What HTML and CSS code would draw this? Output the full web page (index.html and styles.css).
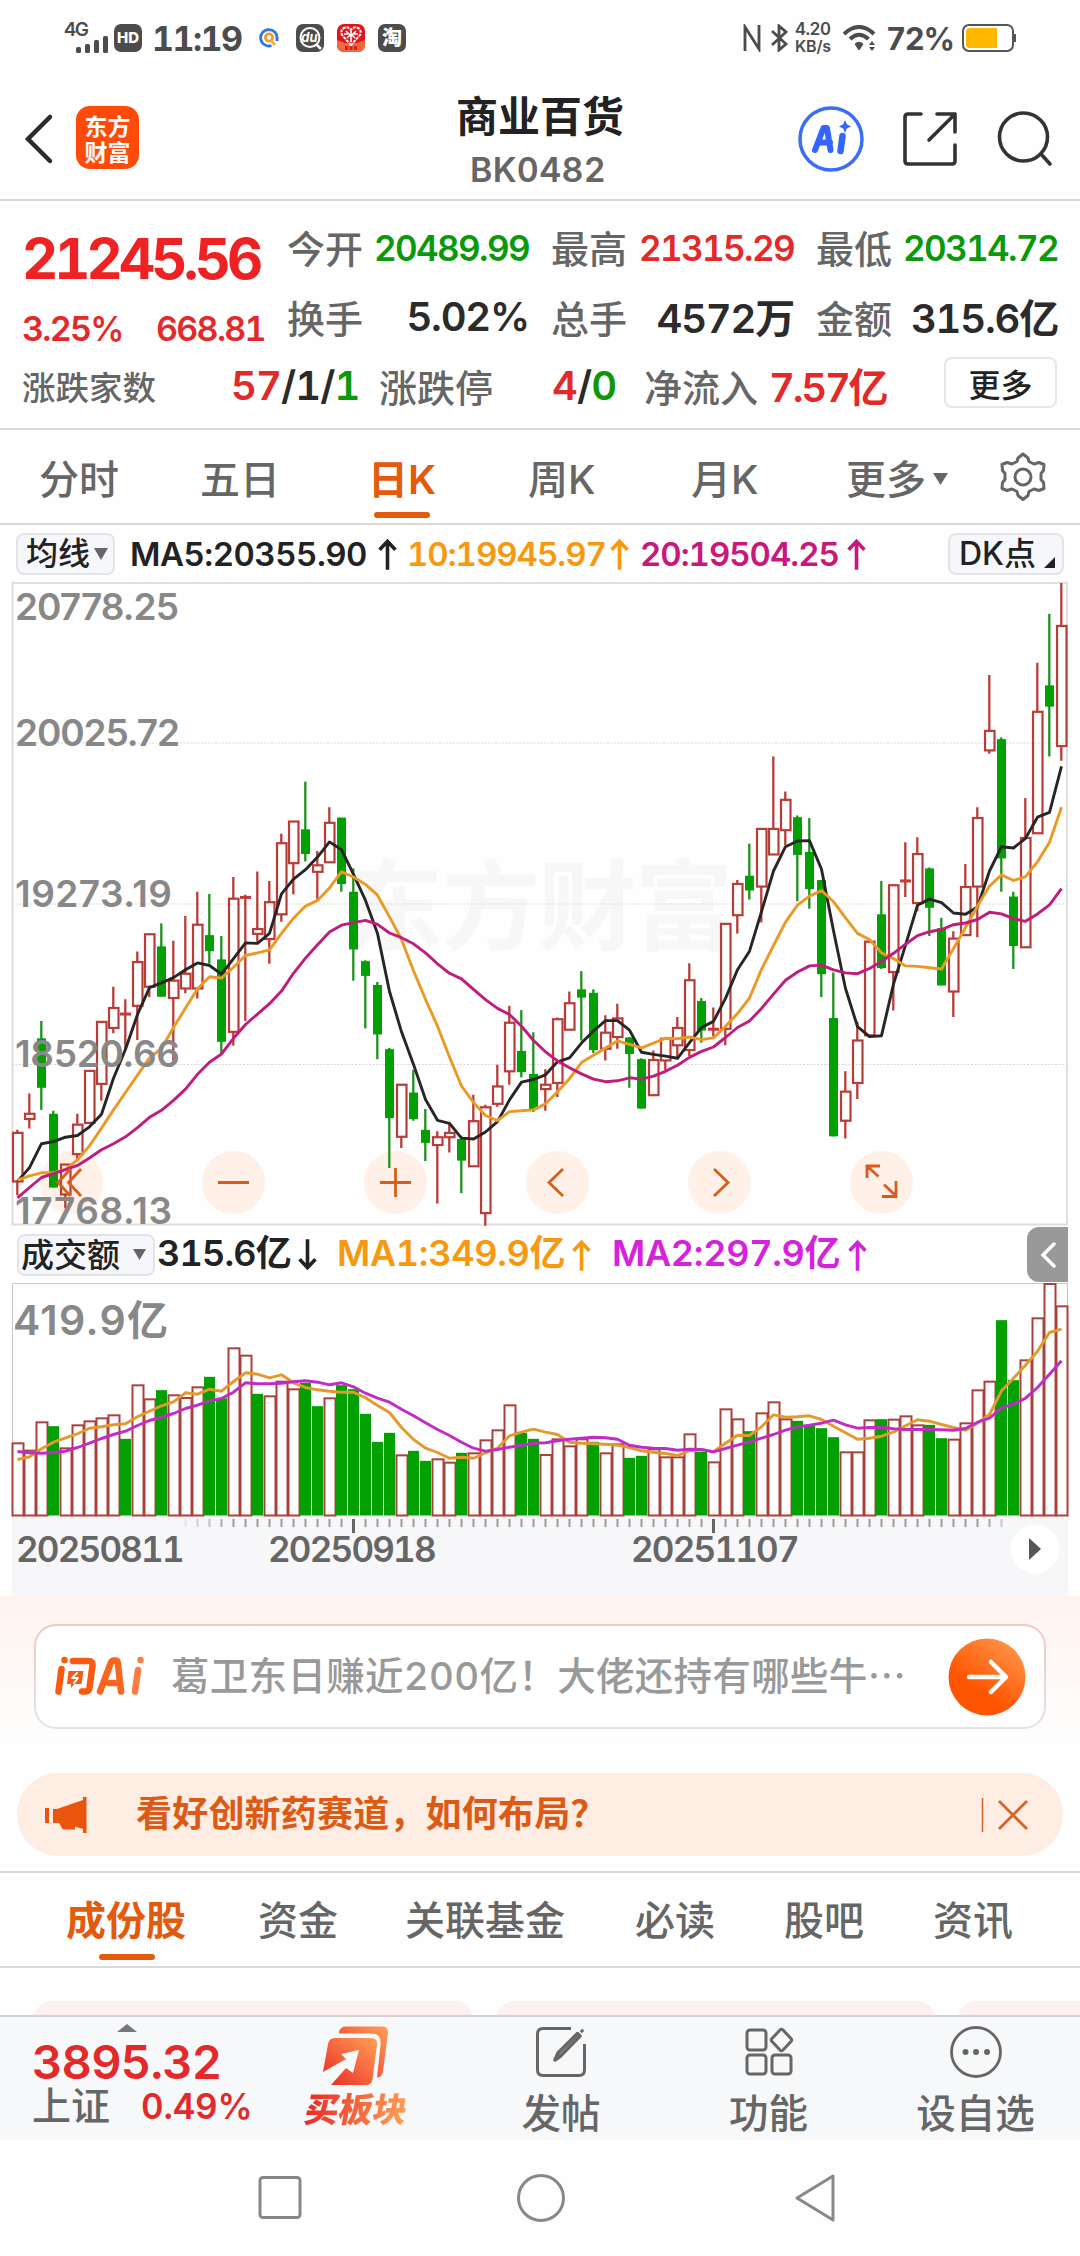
FILE: index.html
```html
<!DOCTYPE html>
<html lang="zh-CN">
<head>
<meta charset="utf-8">
<title>商业百货 BK0482</title>
<link rel="stylesheet" href="styles.css">
</head>
<body>
<svg class="defs" width="0" height="0">
  <defs>
    <symbol id="up" viewBox="0 0 18 30"><path d="M9 30V3M1.500 11L9 3l7.500 8" fill="none" stroke="currentColor" stroke-width="3.400"/></symbol>
    <symbol id="down" viewBox="0 0 18 30"><path d="M9 0v27M1.500 19L9 27l7.500-8" fill="none" stroke="currentColor" stroke-width="3.400"/></symbol>
    <linearGradient id="hot" x1="0" y1="1" x2="1" y2="0"><stop offset="0" stop-color="#ea2a25"/><stop offset="1" stop-color="#ffa056"/></linearGradient>
    <linearGradient id="sun" x1="0.200" y1="1" x2="0.900" y2="0"><stop offset="0.300" stop-color="#ff5500"/><stop offset="1" stop-color="#ff9a50"/></linearGradient>
  </defs>
</svg>

<div class="status">
  <div class="net">
    <span class="gen">4G</span>
    <svg width="34" height="17" fill="#4c4c4c"><rect x="0" y="11" width="5" height="6" rx="1.500"/><rect x="9" y="8" width="5" height="9" rx="1.500"/><rect x="18" y="4" width="5" height="13" rx="1.500"/><rect x="27" y="0" width="5" height="17" rx="1.500"/></svg>
  </div>
  <span class="badge hd">HD</span>
  <span class="clock">11:19</span>
  <svg class="app quark" width="20" height="20" viewBox="0 0 20 20" fill="none" stroke-width="2.800"><path d="M12.500 17.500A8.200 8.200 0 1 1 18 10.500" stroke="#2f78e0"/><path d="M18 10v3" stroke="#3b6fd0"/><circle cx="10" cy="9.500" r="3.600" stroke="#f39a1f"/><path d="M12 12.500l4 4.500" stroke="#f3b13a"/></svg>
  <svg class="app" width="28" height="28" viewBox="0 0 28 28"><rect width="28" height="28" rx="7" fill="#4c4c4c"/><circle cx="14" cy="13.500" r="9.500" fill="none" stroke="#fff" stroke-width="2"/><path d="M20 20l5 5" stroke="#fff" stroke-width="2.500"/><text x="13.500" y="18" text-anchor="middle" class="mini">du</text></svg>
  <svg class="app" width="28" height="28" viewBox="0 0 28 28"><rect width="28" height="28" rx="7" fill="#e0161d"/><path d="M0 16l8 3h12l8-3v5q0 7-7 7H7q-7 0-7-7z" fill="#f26a3c"/><path d="M14 21L5 11q-2-5 2-7t7 2q3-4 7-2t2 7z" fill="none" stroke="#fff" stroke-width="2" stroke-dasharray="3 1"/><path d="M14 7v11M9 7l4 4-3 3M19 7l-4 4 3 3M7 10h4M17 10h4" fill="none" stroke="#fff" stroke-width="1.600"/><path d="M8 24h12" stroke="#d91f26" stroke-width="4" stroke-dasharray="3 1.500"/></svg>
  <span class="badge tao">淘</span>
  <svg class="nfc" width="18" height="28" viewBox="0 0 18 28" fill="none" stroke="#4c4c4c" stroke-width="2.800"><path d="M2 27V3l14 22V1"/></svg>
  <svg class="bt" width="18" height="28" viewBox="0 0 18 28" fill="none" stroke="#4c4c4c" stroke-width="2.800"><path d="M2 7l14 13-7 6V2l7 6L2 21"/></svg>
  <div class="rate"><span>4.20</span><span>KB/s</span></div>
  <svg class="wifi" width="34" height="27" viewBox="0 0 34 27" fill="none" stroke="#4c4c4c" stroke-width="4"><path d="M1 9q15-14 30 0M7 14q9-8.500 18.500 0"/><path d="M12 19q4-3.500 8 0l-4 6z" fill="#4c4c4c" stroke-width="1"/><path d="M26 20l3-4 3 4zM26 22l3 4 3-4z" fill="#4c4c4c" stroke="none"/></svg>
  <span class="pct">72%</span>
  <svg class="battery" width="54" height="28" viewBox="0 0 54 28"><rect x="1" y="1" width="50" height="26" rx="6" fill="#fff" stroke="#555" stroke-width="2"/><path d="M4 8q0-4 4-4h27v20H8q-4 0-4-4z" fill="#ffb800"/><path d="M53 10v8" stroke="#555" stroke-width="2"/></svg>
</div>

<header class="header">
  <svg class="back" width="30" height="52" viewBox="0 0 30 52" fill="none" stroke="#2b2b2b" stroke-width="4.500" stroke-linecap="round"><path d="M26 4L4 26l22 22"/></svg>
  <div class="logo"><span>东方</span><span>财富</span></div>
  <div class="title"><h1>商业百货</h1><p>BK0482</p></div>
  <svg class="ai" width="66" height="66" viewBox="0 0 66 66"><circle cx="33" cy="33" r="31" fill="none" stroke="#3c6ef5" stroke-width="3.500"/><path d="M17 44L25.500 22h3.500l3.500 22M20 36.500h12" fill="none" stroke="#3366ff" stroke-width="6" stroke-linejoin="round" stroke-linecap="round"/><path d="M44.500 30L42.500 45" stroke="#3366ff" stroke-width="6.500" stroke-linecap="round"/><path d="M47 14l1.800 4.200L53 20.500l-4.200 2L47 27l-1.800-4.500-4.200-2 4.200-2.300z" fill="#3366ff"/></svg>
  <svg class="share" width="56" height="56" viewBox="0 0 56 56" fill="none" stroke="#333" stroke-width="3.600" stroke-linejoin="round" stroke-linecap="round"><path d="M19 3H6q-3 0-3 3v44q0 3 3 3h44q3 0 3-3V34M35 3h18v18M53 3L27 29"/></svg>
  <svg class="find" width="56" height="56" viewBox="0 0 56 56" fill="none" stroke="#333" stroke-width="3.600" stroke-linecap="round"><circle cx="26.500" cy="26" r="24"/><path d="M44 43l9 10"/></svg>
</header>

<section class="quote">
  <div class="quote-top">
    <div class="last">
      <div class="price">21245.56</div>
      <div class="change"><span>3.25%</span><span>668.81</span></div>
    </div>
    <dl class="stats">
      <div><dt>今开</dt><dd class="sm green">20489.99</dd></div>
      <div><dt>最高</dt><dd class="sm red">21315.29</dd></div>
      <div><dt>最低</dt><dd class="sm green">20314.72</dd></div>
      <div><dt>换手</dt><dd>5.02%</dd></div>
      <div><dt>总手</dt><dd>4572万</dd></div>
      <div><dt>金额</dt><dd>315.6亿</dd></div>
    </dl>
  </div>
  <div class="breadth">
    <span class="lbl small">涨跌家数</span><span class="val"><b class="red">57</b>/1/<b class="green">1</b></span>
    <span class="lbl">涨跌停</span><span class="val"><b class="red">4</b>/<b class="green">0</b></span>
    <span class="lbl">净流入</span><span class="val flow red">7.57亿</span>
    <button class="more">更多</button>
  </div>
</section>

<nav class="periods">
  <span>分时</span><span>五日</span><span class="on">日K</span><span>周K</span><span>月K</span>
  <span class="drop">更多<svg width="16" height="12"><path d="M0 0h15L7.500 12z" fill="#666"/></svg></span>
  <svg width="50" height="50" viewBox="0 0 50 50" fill="none" stroke="#666" stroke-width="3" stroke-linejoin="round"><path d="M20 6l5-4 5 4 1 3.500 5 2.500 5-1.500 5 2-.5 6-2.500 3v6l2.500 3 .5 6-5 2-5-1.500-5 2.500-1 4-5 4-5-4-1-4-5-2.500-5 1.500-5-2 .5-6 2.500-3v-6l-2.500-3-.5-6 5-2 5 1.500 5-2.500z"/><circle cx="25" cy="25" r="8"/></svg>
</nav>

<div class="ma-row">
  <span class="chip">均线<svg width="15" height="12"><path d="M0 0h14L7 12z" fill="#666"/></svg></span>
  <span class="ma k">MA5:20355.90</span><svg class="arr k"><use href="#up"/></svg>
  <span class="ma o">10:19945.97</span><svg class="arr o"><use href="#up"/></svg>
  <span class="ma p">20:19504.25</span><svg class="arr p"><use href="#up"/></svg>
  <span class="chip dk">DK点<svg width="11" height="11"><path d="M11 0v11H0z" fill="#222"/></svg></span>
</div>

<svg class="kline" id="kline" width="1080" height="646" viewBox="0 0 1080 646">
  <text class="mark" x="345" y="360" textLength="388">东方财富</text>
  <path d="M12.500 1v641.500H1067V1z" fill="none" stroke="#dedede" stroke-width="2"/>
  <path d="M12 161H1067M12 322H1067M12 482.500H1067" stroke="#d9d9d9" stroke-width="1" stroke-dasharray="2 1.500"/>
  <g fill="#ffe6d9" fill-opacity="0.600"><circle cx="71.500" cy="600.500" r="31.500"/><circle cx="233.500" cy="600.500" r="31.500"/><circle cx="395.500" cy="600.500" r="31.500"/><circle cx="557.500" cy="600.500" r="31.500"/><circle cx="719.500" cy="600.500" r="31.500"/><circle cx="881.500" cy="600.500" r="31.500"/></g>
  <g id="candles"></g>
  <g fill="none" stroke="#d95c1c" stroke-width="2.800"><path d="M70.500 587L58 600.500 70.500 614M81 587L68.500 600.500 81 614M218 600.500h31M380 600.500h31M395.500 586v29M563 587l-14 13.500L563 614M714 587l14 13.500L714 614M867 596v-12h13M867.500 584.500l11 10M896 599v15.500h-14M884 602.500l12 11.500"/></g>
  <g class="axis"><text x="15" y="38" textLength="164">20778.25</text><text x="15" y="164" textLength="165">20025.72</text><text x="15" y="324.500" textLength="157">19273.19</text><text x="15" y="484.500" textLength="165">18520.66</text><text x="15" y="642" textLength="157">17768.13</text></g>
</svg>

<div class="vol-row">
  <span class="chip vol">成交额<svg width="14" height="11"><path d="M0 0h13L6.500 11z" fill="#666"/></svg></span>
  <span class="ma k">315.6亿</span><svg class="arr k"><use href="#down"/></svg>
  <span class="ma o">MA1:349.9亿</span><svg class="arr o"><use href="#up"/></svg>
  <span class="ma v">MA2:297.9亿</span><svg class="arr v"><use href="#up"/></svg>
  <span class="fold"><svg width="16" height="26" viewBox="0 0 16 26" fill="none" stroke="#fff" stroke-width="3.500" stroke-linecap="round"><path d="M14 2L3 13l11 11"/></svg></span>
</div>

<svg class="volume" width="1080" height="234" viewBox="0 0 1080 234">
  <path d="M12.500 234V.5H1067.500V234" fill="none" stroke="#c8c8c8"/>
  <text class="big" x="13" y="51.500" textLength="155">419.9亿</text>
  <g id="bars"></g>
</svg>

<div class="dates">
  <svg class="ticks" id="ticks" width="1056" height="16"></svg>
  <div class="days"><span>20250811</span><span>20250918</span><span>20251107</span>
    <svg width="50" height="50"><circle cx="25" cy="25" r="24.500" fill="#fff"/><path d="M19 14v22l12-11z" fill="#555"/></svg></div>
</div>

<section class="ask">
  <div class="ask-card">
    <svg width="90" height="42" viewBox="0 0 90 42" fill="none" stroke="#f75a10" stroke-width="6.500" stroke-linecap="round" stroke-linejoin="round"><path d="M6.500 13L3.500 35.500M9.500 4v.1M18 5h15.500q4.500 0 4 4.500L34.500 32q-.6 3.500-4 3.500H27"/><path d="M13.500 15h15l-2 13h-7l-3.500 4v-4h-4z" fill="#f75a10" stroke="none"/><path d="M22 17l-5 5h6l-4 5" stroke="#fff" stroke-width="1.800"/><path d="M45 35.500L56 6.500q.8-2 3-2h1.500q2 0 2.300 2.500L66 35.500M54 27h9" stroke="#f9651f"/><path d="M83 14l-3 21.500M85.500 4v.1" stroke="#ff7b45"/></svg>
    <span class="ask-text">葛卫东日赚近200亿！大佬还持有哪些牛<i>⋯</i></span>
    <svg class="go" width="78" height="78" viewBox="0 0 78 78"><circle cx="39" cy="39" r="38.500" fill="url(#sun)"/><path d="M21 39h36M43 24l15 15-15 15" fill="none" stroke="#fff" stroke-width="4.500" stroke-linecap="round" stroke-linejoin="round"/></svg>
  </div>
  <div class="promo">
    <svg width="42" height="36" viewBox="0 0 42 36" fill="#e9550c"><path d="M0 11h4v15H0zM8 12h4L38 3V0h3.500v36H38v-4l-8-2.500v3H18L14 26H8z"/></svg>
    <span class="promo-text">看好创新药赛道，如何布局？</span>
    <svg width="50" height="34" viewBox="0 0 50 34" fill="none" stroke="#d9622a"><path d="M1.500 0v34" stroke-width="1.500"/><path d="M18 3l28 28M46 3L18 31" stroke-width="2.800"/></svg>
  </div>
</section>

<nav class="sections"><span class="on">成份股</span><span>资金</span><span>关联基金</span><span>必读</span><span>股吧</span><span>资讯</span></nav>
<div class="cards"><i></i><i></i><i></i></div>

<footer class="bar">
  <div class="index">
    <svg width="20" height="8"><path d="M0 8L10 0l10 8z" fill="#777"/></svg>
    <div class="idx">3895.32</div>
    <div class="sub"><span>上证</span><b>0.49%</b></div>
  </div>
  <div class="buy">
    <svg width="66" height="60" viewBox="0 0 66 60"><path d="M16 6q1-5.500 7-5.500h36q6.500 0 6 6.500l-5 38q-.7 6-6 6.500l3.500-32q1.300-12-9-12H16z" fill="url(#hot)"/><path d="M5 18q.8-6 7-6h36q7 0 6 7l-4.500 34q-.8 6-6.500 6H8l15-17 7 5L36 24l-18 4 5 5L0 46z" fill="url(#hot)"/></svg>
    <span>买板块</span>
  </div>
  <div class="act a1"><svg width="52" height="52" viewBox="0 0 52 52" fill="none" stroke="#666" stroke-width="3" stroke-linejoin="round"><path d="M36 2.500H8Q2.500 2.500 2.500 8v36q0 5.500 5.500 5.500h36q5.500 0 5.500-5.500V18"/><path d="M20 34l3-7L42.500 7.500l2.500 2.500L25.500 30zM46 4l2 2" stroke-width="3.500"/></svg><span>发帖</span></div>
  <div class="act a2"><svg width="52" height="52" viewBox="0 0 52 52" fill="none" stroke="#666" stroke-width="3" stroke-linejoin="round"><rect x="4" y="4" width="19" height="20" rx="3"/><rect x="4" y="29" width="19" height="19" rx="3"/><rect x="29" y="29" width="19" height="19" rx="3"/><path d="M37 4q1.500-1.500 3 0l8 8.500q1.500 1.500 0 3L40 24q-1.500 1.500-3 0l-8-8.500q-1.500-1.500 0-3z"/></svg><span>功能</span></div>
  <div class="act a3"><svg width="52" height="52" viewBox="0 0 52 52" fill="none" stroke="#666" stroke-width="2.800"><circle cx="26" cy="26" r="24.500"/><g fill="#666" stroke="none"><circle cx="15.500" cy="26" r="3"/><circle cx="26" cy="26" r="3"/><circle cx="37" cy="26" r="3"/></g></svg><span>设自选</span></div>
</footer>

<div class="sysnav">
  <svg width="44" height="48" viewBox="0 0 44 48"><rect x="2" y="3.500" width="40" height="40" rx="3"/></svg>
  <svg width="48" height="48" viewBox="0 0 48 48"><circle cx="24" cy="24" r="22.500"/></svg>
  <svg width="42" height="48" viewBox="0 0 42 48"><path d="M39 2v44L3 24z"/></svg>
</div>
<script src="chart.js"></script>
</body>
</html>
```
FILE: styles.css
```css
* { box-sizing: border-box; }
body {
  margin: 0;
  width: 1080px;
  height: 2256px;
  overflow: hidden;
  background: #fefefe;
  color: #666;
  font-family: Inter, "Noto Sans CJK SC", sans-serif;
  font-weight: 500;
  font-variant-numeric: tabular-nums;
}
svg { display: block; flex: none; }
.defs { position: absolute; }
h1, p, dl, dd { margin: 0; }
b, i { font-weight: inherit; font-style: normal; }
.red { color: #e22a2a; }
.green { color: #0a990a; }
span { white-space: nowrap; }

/* status bar */
.status { height: 76px; display: flex; align-items: center; padding-left: 64px; color: #4c4c4c; }
.net { width: 50px; height: 30px; display: flex; flex-direction: column; }
.net svg { margin-left: 12px; margin-top: -1px; }
.gen { font-size: 19px; line-height: 14px; font-weight: 600; letter-spacing: -1.500px; }
.badge { width: 28px; height: 28px; border-radius: 7px; background: #4c4c4c; color: #fff; text-align: center; line-height: 28px; font-weight: 800; }
.hd { font-size: 15px; }
.tao { font-size: 20px; margin-left: 13px; }
.clock { font-size: 34px; font-weight: 700; margin-left: 10px; width: 107px; letter-spacing: -1.500px; }
.app { margin-left: 13px; }
.quark { margin-left: 0; margin-right: 4px; }
.mini { font: italic 700 13px Inter, sans-serif; fill: #fff; }
.nfc { margin-left: 337px; }
.bt { margin-left: 9px; }
.rate { margin-left: 7px; width: 48px; display: flex; flex-direction: column; font-size: 17px; line-height: 17px; font-weight: 600; letter-spacing: -0.500px; }
.rate span + span { font-size: 16px; letter-spacing: -0.200px; }
.pct { font-size: 31px; font-weight: 700; margin-left: 9px; width: 76px; letter-spacing: -1.300px; }

/* title bar */
.header { height: 125px; border-bottom: 2px solid #d8d8d8; display: grid; grid-template-columns: 52px 334px 388px 104px 95px 1fr; padding-left: 24px; align-items: center; }
.header svg { margin-top: 2px; }
.logo { width: 63px; height: 63px; border-radius: 14px; background: #ff4b0a; color: #fff; font: 700 23px/26px "Noto Sans CJK SC", sans-serif; display: flex; flex-direction: column; align-items: center; justify-content: center; }
.title { text-align: center; width: 260px; align-self: start; }
.title h1 { font-size: 42px; line-height: 60px; font-weight: 600; color: #222; padding-top: 11px; }
.title p { font-size: 34px; line-height: 44px; margin-top: 1px; font-weight: 600; letter-spacing: 0.300px; margin-left: -4px; }

/* quote */
.quote { height: 229px; border-bottom: 2px solid #d8d8d8; padding: 15px 0 0 22px; }
.quote-top { display: grid; grid-template-columns: 265px 1fr; height: 139px; }
.price { font-size: 56px; line-height: 87px; font-weight: 700; color: #ee2222; letter-spacing: -3.900px; }
.change { display: grid; grid-template-columns: 134px 1fr; font-size: 34px; line-height: 52px; font-weight: 600; color: #e22a2a; letter-spacing: -1.700px; }
.stats { display: grid; grid-template-columns: 242px 265px 264px; grid-auto-rows: 60px; row-gap: 10px; }
.stats div { display: flex; justify-content: space-between; align-items: center; }
.stats div:nth-child(3n+2), .stats div:nth-child(3n) { padding-left: 22px; }
dt { font-size: 38px; }
dd { font-size: 40px; color: #2b2b2b; letter-spacing: -1.200px; font-weight: 600; }
dd.sm { font-size: 35px; letter-spacing: -1.600px; padding-top: 4px; }
dd.red { color: #e22a2a; }
dd.green { color: #0a990a; }
.breadth { display: grid; grid-template-columns: 209px 148px 173px 92px 125px 175px 113px; height: 60px; align-items: center; }
.lbl { font-size: 38px; }
.small { font-size: 33.500px; }
.val { font-size: 40px; color: #2b2b2b; letter-spacing: -0.900px; font-weight: 600; }
.val.red { color: #e22a2a; }
.val.flow { letter-spacing: -2.200px; }
.more { height: 51px; margin-top: -5px; border: 2px solid #e6e6e6; border-radius: 8px; background: #fff; font: 500 32px Inter, "Noto Sans CJK SC", sans-serif; color: #222; padding: 0; }

/* period tabs */
.periods { height: 95px; border-bottom: 2px solid #d8d8d8; display: grid; grid-template-columns: 161px 168px 160px 163px 155px 152px 1fr; padding-left: 39px; align-items: center; font-size: 40px; }
.periods > span { line-height: 91px; height: 94px; padding-top: 4px; position: relative; width: max-content; }
.on { color: #e25a0c; font-weight: 600; position: relative; }
.on::after { content: ""; position: absolute; left: 50%; bottom: 6px; width: 56px; height: 6px; margin-left: -28px; border-radius: 3px; background: #e25a0c; }
.drop { display: flex; align-items: center; gap: 7px; }

/* indicator rows */
.ma-row { height: 57px; display: grid; grid-template-columns: 114px 248px 29px 203px 30px 207px 101px 115px; padding-left: 16px; align-items: center; }
.vol-row { height: 57px; display: grid; grid-template-columns: 140px 141px 39px 235px 40px 236px 179px 41px; padding-left: 17px; align-items: center; }
.chip { height: 42px; border: 2px solid #e3e4e8; border-radius: 8px; background: #f6f7fa; color: #222; font-size: 32px; line-height: 36px; display: flex; align-items: center; }
.ma-row .chip:first-child { width: 99px; padding-left: 8px; gap: 4px; }
.chip.dk { width: 116px; padding-left: 9px; gap: 8px; }
.dk svg { margin-top: 18px; }
.chip.vol { width: 138px; font-size: 33px; padding-left: 2px; gap: 13px; }
.ma { font-size: 33px; letter-spacing: -1px; font-weight: 600; padding-top: 1px; }
.ma.k { letter-spacing: -0.500px; }
.vol-row .ma { font-size: 36px; letter-spacing: -0.800px; line-height: 48px; margin-top: -4px; }
.vol-row .ma.o, .vol-row .ma.v { letter-spacing: -0.300px; }
.arr { width: 19px; height: 32px; }
.k { color: #222; }
.o { color: #f7990f; }
.p { color: #c9177e; }
.v { color: #d522dc; }
.fold { height: 55px; background: #999; border-radius: 12px 0 0 12px; display: flex; align-items: center; justify-content: center; }

/* charts */
.kline { margin-bottom: -2px; }
.mark { font: 700 98px "Noto Sans CJK SC", sans-serif; fill: #f7f7f7; }
.axis text { font: 600 37px Inter, sans-serif; fill: #888; }
.big { font: 600 41px Inter, "Noto Sans CJK SC", sans-serif; fill: #888; }
.dates { margin: 0 12px; height: 79px; background: #f7f7fa; }
.days { display: grid; grid-template-columns: 252px 363px 378px 50px; padding-left: 4px; height: 40px; align-items: center; font-size: 35px; font-weight: 600; margin-top: -1px; letter-spacing: -1.800px; }
.days span { line-height: 40px; margin-top: -8px; }
.days svg { margin-top: -8px; margin-left: 1px; }

/* ask and promo */
.ask { height: 277px; padding-top: 28px; background: linear-gradient(#fff3ee, #fefefe 150px); border-bottom: 2px solid #d8d8d8; }
.ask-card { margin: 0 34px; height: 105px; border-radius: 22px; border: 2px solid transparent; background: linear-gradient(#fff, #fff) padding-box, linear-gradient(#f3c8bd, #dfe4ee) border-box; display: grid; grid-template-columns: 116px 796px 78px; padding-left: 19px; justify-content: start; align-items: center; }
.ask-card .go { margin-left: -19px; }
.ask-text { font-size: 38.500px; color: #999; letter-spacing: 0.300px; line-height: 56px; margin-top: -2px; }
.promo { margin: 44px 17px 0; height: 83px; border-radius: 42px; background: #fdede3; display: grid; grid-template-columns: 91px 845px 50px; padding-left: 28px; align-items: center; }
.promo-text { font-size: 36px; color: #dd5a14; font-weight: 600; line-height: 50px; margin-top: -2px; letter-spacing: 0.200px; }

/* section tabs */
.sections { height: 95px; border-bottom: 2px solid #d8d8d8; display: grid; grid-template-columns: 192px 147px 230px 149px 149px 1fr; padding-left: 66px; font-size: 40px; line-height: 95px; }
.sections span { width: max-content; height: 94px; }
.sections .on::after { margin-left: -27px; bottom: 7px; }
.cards { height: 47px; display: flex; gap: 23px; padding: 33px 0 0 34px; overflow: hidden; }
.cards i { flex: none; width: 439px; height: 60px; border-radius: 18px; background: #fdf0f0; }

/* bottom bar */
.bar { height: 125px; background: #f7f8fa; border-top: 2px solid #d0d2d6; display: flex; }
.index { width: 299px; padding: 7px 0 0 32px; }
.index svg { margin-left: 85px; }
.idx { font-size: 47px; line-height: 48px; margin-top: 6px; color: #e22a2a; font-weight: 600; letter-spacing: -0.800px; }
.sub { display: flex; align-items: center; font-size: 39px; line-height: 42px; margin-top: -1px; }
.sub b { font-size: 35px; font-weight: 600; color: #e22a2a; margin-left: 31px; letter-spacing: -0.200px; }
.buy { width: 114px; display: flex; flex-direction: column; align-items: center; padding-top: 9px; }
.buy span { font-size: 34px; line-height: 44px; font-weight: 900; transform: skewX(-10deg); background: linear-gradient(90deg, #e92a25, #ffa056); -webkit-background-clip: text; color: transparent; margin-top: 2px; }
.act { display: flex; flex-direction: column; align-items: center; font-size: 39.500px; line-height: 56px; padding-top: 9px; gap: 8px; width: 207px; }
.a1 { margin-left: 44px; width: 208px; }

/* system navigation */
.sysnav { height: 116px; display: flex; padding: 34px 0 0 258px; fill: none; stroke: #888; stroke-width: 3px; stroke-linejoin: round; }
.sysnav svg:nth-child(2) { margin-left: 215px; }
.sysnav svg:nth-child(3) { margin-left: 229px; }
```
FILE: chart.js
```js
// Each candle: colour, high, body top, body bottom, low (chart units, downwards).
const CANDLES = `r 1291 1298 1410 1442|r 1207 1254 1266 1288|g 1040 1080 1194 1245|g 1247 1254 1424 1424|r 1371 1371 1440 1472|r 1254 1279 1347 1363|r 1155 1155 1275 1275|r 1041 1042 1185 1224|r 961 1010 1056 1068|r 990 1024 1024 1105|r 880 904 1005 1084|r 840 840 961 985|g 815 868 984 984|r 855 947 987 1140|r 798 931 965 976|r 742 818 965 988|g 747 842 879 908|g 844 898 1088 1115|r 708 758 1065 1097|r 749 755 755 1040|r 695 828 839 857|r 717 766 851 908|r 608 630 794 811|r 580 580 676 748|g 488 598 655 672|r 648 681 696 759|r 547 583 674 674|g 571 571 724 742|g 688 742 875 947|g 900 902 936 1057|g 950 957 1071 1128|g 1102 1105 1264 1379|r 1187 1187 1307 1333|g 1153 1205 1266 1270|g 1243 1291 1321 1363|r 1294 1308 1326 1461|r 1273 1298 1308 1343|g 1305 1312 1362 1437|r 1210 1271 1375 1375|r 1233 1239 1483 1512|r 1141 1191 1231 1238|r 1005 1044 1156 1187|g 1015 1109 1158 1170|g 1066 1162 1244 1250|r 1151 1187 1197 1247|r 1032 1036 1183 1215|r 972 999 1060 1060|g 925 967 986 1085|g 967 975 1107 1114|r 1027 1067 1104 1131|r 1000 1034 1077 1104|g 1077 1078 1116 1194|g 1126 1128 1242 1242|r 1108 1130 1211 1211|r 1080 1081 1131 1153|r 1031 1056 1096 1128|r 907 946 1107 1121|g 987 994 1062 1090|r 1009 1059 1059 1076|r 816 816 1058 1096|r 715 724 796 838|g 631 705 739 760|r 596 597 730 813|r 430 597 656 656|r 511 530 600 635|g 566 570 657 764|g 572 650 736 781|g 715 715 932 985|g 928 1033 1306 1306|r 1156 1203 1270 1311|r 1042 1085 1183 1220|r 857 857 1073 1073|g 717 794 918 920|r 725 727 927 1016|r 628 717 717 754|r 616 655 768 787|g 686 688 779 844|g 802 826 958 958|r 833 850 972 1031|r 678 731 842 842|r 547 572 730 847|r 242 371 416 424|g 386 390 665 742|g 742 753 867 920|r 526 618 870 870|r 214 327 607 607|g 101 266 315 430|r 30 129 406 440`
  .split('|').map(s => s.split(' '));
const MA5 = [1410,1378,1323,1318,1308,1304,1284,1255,1172,1105,1025,963,952,940,922,906,912,932,896,860,861,838,747,713,691,662,627,645,702,762,838,972,1065,1140,1221,1269,1276,1310,1312,1296,1272,1222,1181,1175,1164,1134,1125,1091,1063,1039,1039,1061,1112,1117,1121,1126,1090,1055,1041,988,922,879,788,694,638,625,624,690,832,965,1053,1076,1074,955,865,773,759,767,791,794,777,694,638,641,619,570,559,453];
const MA10 = [1407,1397,1390,1390,1382,1360,1328,1287,1245,1205,1165,1125,1103,1055,1010,966,938,941,916,889,883,876,838,803,775,762,733,696,708,725,750,800,852,924,990,1052,1123,1190,1228,1258,1270,1249,1247,1245,1231,1203,1173,1136,1119,1102,1086,1094,1102,1091,1080,1081,1077,1083,1079,1052,1023,987,921,866,812,773,752,739,765,802,838,852,883,896,913,914,917,920,873,825,775,729,703,716,707,673,628,547];
const MA20 = [1448,1424,1401,1392,1383,1373,1356,1337,1323,1307,1286,1262,1246,1223,1197,1163,1135,1116,1080,1048,1024,1000,971,930,895,864,835,819,813,808,817,837,848,862,883,908,930,943,967,991,1011,1025,1052,1085,1111,1132,1148,1162,1174,1180,1178,1171,1174,1167,1156,1142,1124,1110,1100,1078,1055,1040,1011,978,946,927,913,911,922,929,931,919,903,884,863,843,834,829,818,814,806,789,793,804,810,793,772,735];
const VOLS = 'r668 r690 r605 g618 r683 r614 r602 r593 r584 g656 r494 r536 g510 r524 r532 r500 g470 g534 r383 r405 g521 r527 r483 r506 g488 g558 r533 g495 g507 g581 g665 g638 r704 g692 g722 r716 r726 g698 r698 r659 r629 r554 g638 g656 r703 r656 r677 r656 g665 r698 r671 g713 g707 r686 r710 r710 r641 g695 r725 r566 r596 g633 r578 r545 r596 g602 g617 g624 g651 r695 r695 r599 g597 r597 r587 r614 g614 g654 r657 r608 r509 r483 g300 g480 r419 r293 r190 r257'.split(' ');
const V1 = [718,710,686,666,653,641,624,620,614,611,590,573,557,545,518,522,507,513,484,458,462,473,464,488,502,509,513,516,516,533,556,577,622,658,684,697,714,711,714,698,684,647,636,627,636,643,666,669,671,672,675,682,692,696,700,706,692,689,695,669,645,646,620,584,591,590,587,598,618,638,657,654,648,636,617,599,603,613,622,630,609,583,512,474,435,393,337,327];
const V2 = [694,698,699,697,693,682,669,655,643,633,616,601,591,580,565,555,542,535,516,488,491,491,489,485,482,486,494,488,500,519,534,546,567,587,608,628,646,666,684,693,688,681,675,669,668,662,657,654,651,653,657,675,681,684,685,690,687,688,695,685,675,665,654,643,630,620,615,609,600,614,624,622,621,626,628,628,628,629,630,625,606,594,563,552,534,502,462,422];

const RED = '#b83c38', GREEN = '#02a002';
const x = i => 17.500 + i * 12;
const py = v => v / 2.306 - 12;
const vy = v => (v - 190) / 3 + 0.500;
const line = (data, y, color, w) =>
  `<polyline fill="none" stroke="${color}" stroke-width="${w}" stroke-linejoin="round" points="${data.map((v, i) => x(i) + ',' + y(v).toFixed(1)).join(' ')}"/>`;

let out = '';
CANDLES.forEach(([c, ...n], i) => {
  const [h, t, b, l] = n.map(v => py(+v));
  const cx = x(i);
  if (c === 'g') {
    out += `<path d="M${cx - .2} ${h}V${l}" stroke="#1f911f" stroke-width="2.300"/><rect x="${cx - 4.500}" y="${t}" width="9" height="${b - t}" fill="${GREEN}"/>`;
  } else {
    out += `<path d="M${cx - .2} ${h}V${t}M${cx - .2} ${b}V${l}" stroke="${RED}" stroke-width="2.300"/>`;
    out += b - t < 1
      ? `<rect x="${cx - 5.500}" y="${t - 1.500}" width="11" height="3" fill="#c43a36"/>`
      : `<rect x="${cx - 4.500}" y="${t}" width="9.500" height="${b - t}" fill="none" stroke="${RED}" stroke-width="2.200"/>`;
  }
});
out += line(MA5, py, '#262626', 2.900) + line(MA10, py, '#ea9a24', 2.900) + line(MA20, py, '#bf1c7c', 2.900);
document.getElementById('candles').innerHTML = out;

let bars = '';
VOLS.forEach((s, i) => {
  const y = vy(+s.slice(1)), h = 232.500 - y, cx = x(i);
  bars += s[0] === 'g'
    ? `<rect x="${cx - 5.500}" y="${y}" width="11" height="${h}" fill="${GREEN}"/>`
    : `<rect x="${cx - 5}" y="${y + .5}" width="11" height="${h - .5}" fill="#fefefe" stroke="#a8423d" stroke-width="2"/>`;
});
document.getElementById('bars').innerHTML = bars + line(V1, vy, '#e29a2c', 2.900) + line(V2, vy, '#c22cc6', 2.900);

let ticks = '';
for (let i = 14; i <= 82; i++) {
  const major = i === 28 || i === 58;
  const fade = Math.min(1, (i - 13) / 5, (83.500 - i) / 3);
  ticks += `<path d="M${x(i) - 12} 2V${major ? 16 : 10}" stroke="${major ? '#666' : '#999'}" stroke-width="${major ? 3 : 2}" opacity="${fade}"/>`;
}
document.getElementById('ticks').innerHTML = ticks;
```
